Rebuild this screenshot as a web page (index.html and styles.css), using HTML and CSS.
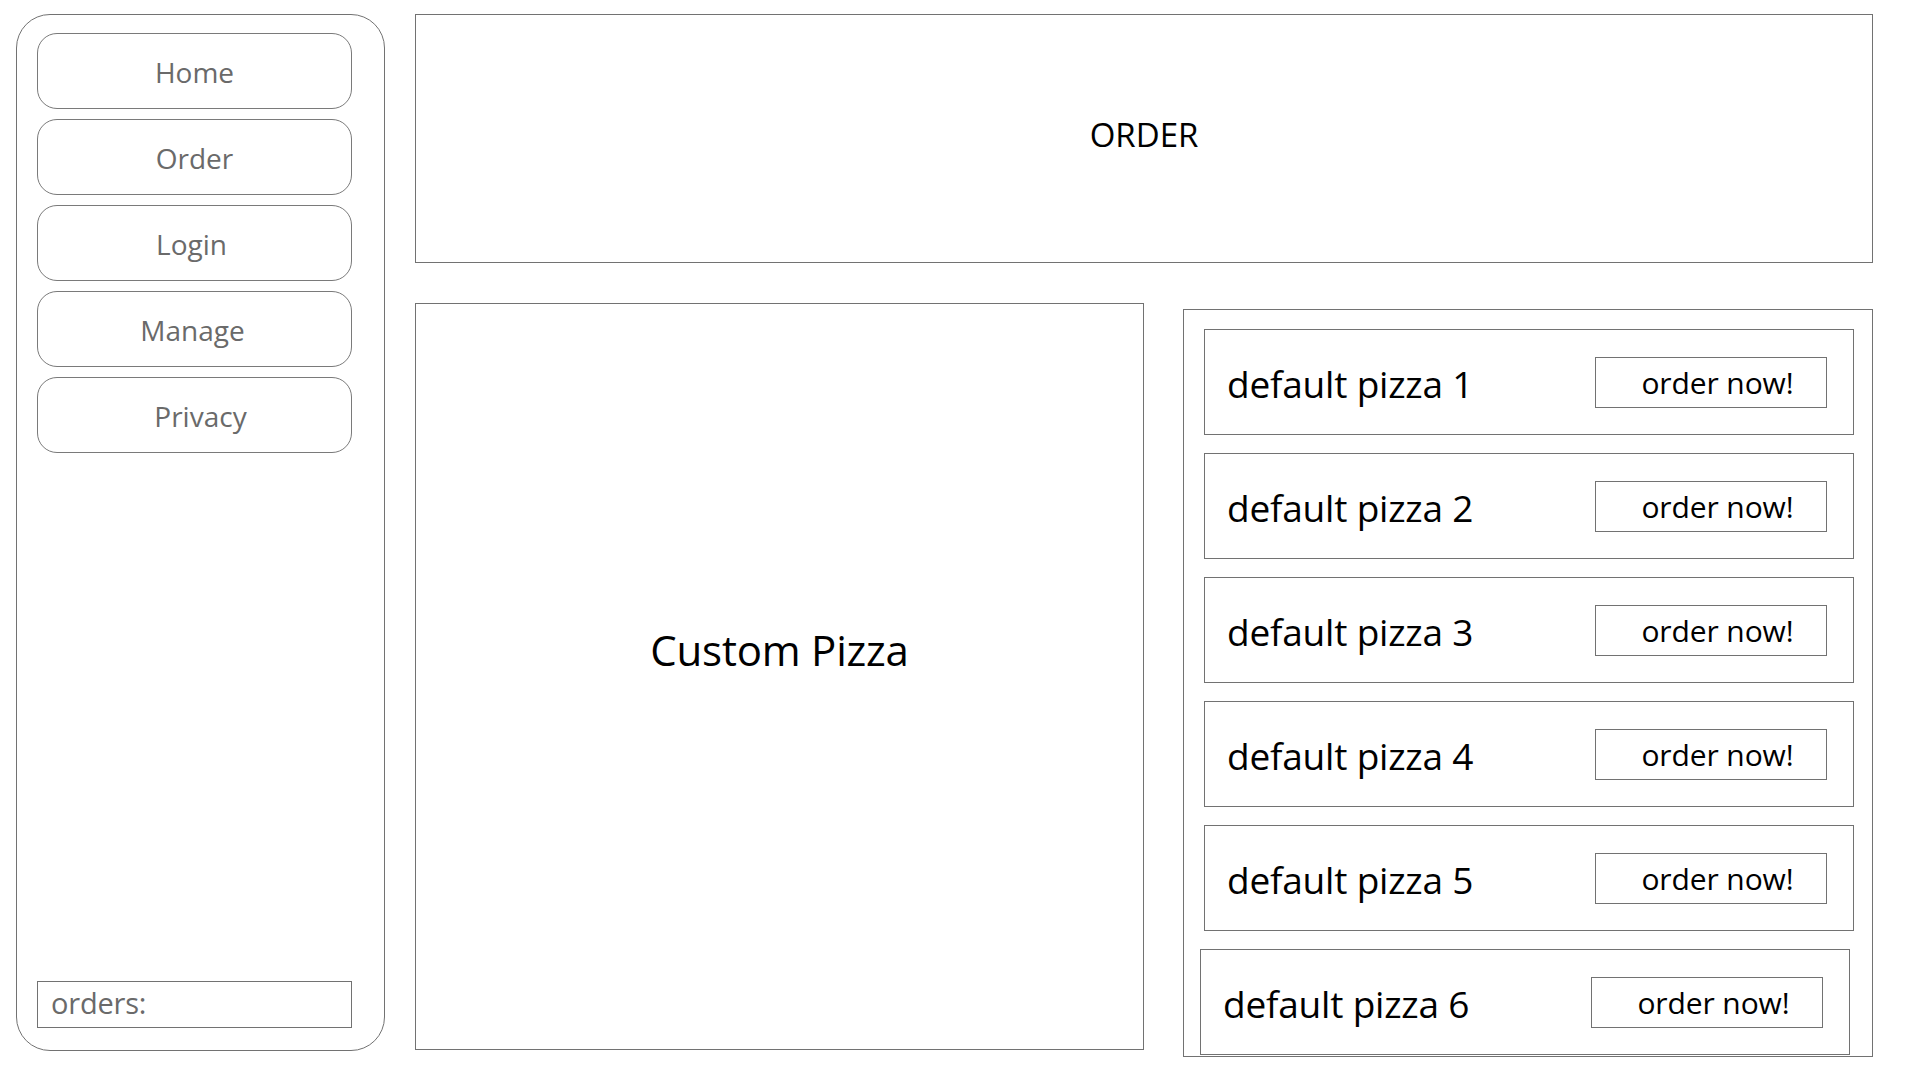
FILE: index.html
```html
<!DOCTYPE html>
<html lang="en">
<head>
<meta charset="utf-8">
<title>Order</title>
<link rel="stylesheet" href="styles.css">
</head>
<body>
<div class="page">
  <aside class="sidebar">
    <nav class="nav">
      <a class="nav-btn" href="#">Home</a>
      <a class="nav-btn" href="#">Order</a>
      <a class="nav-btn nav-login" href="#">Login</a>
      <a class="nav-btn nav-manage" href="#">Manage</a>
      <a class="nav-btn nav-privacy" href="#">Privacy</a>
    </nav>
    <div class="orders">orders:</div>
  </aside>
  <main class="main">
    <header class="header">ORDER</header>
    <div class="content">
      <section class="custom">Custom Pizza</section>
      <section class="list">
        <div class="item"><span class="item-name">default pizza 1</span><button class="order-btn">order now!</button></div>
        <div class="item"><span class="item-name">default pizza 2</span><button class="order-btn">order now!</button></div>
        <div class="item"><span class="item-name">default pizza 3</span><button class="order-btn">order now!</button></div>
        <div class="item"><span class="item-name">default pizza 4</span><button class="order-btn">order now!</button></div>
        <div class="item"><span class="item-name">default pizza 5</span><button class="order-btn">order now!</button></div>
        <div class="item item-shifted"><span class="item-name">default pizza 6</span><button class="order-btn">order now!</button></div>
      </section>
    </div>
  </main>
</div>
</body>
</html>
```
FILE: styles.css
```css
* { box-sizing: border-box; }

html, body {
  margin: 0;
  padding: 0;
  background: #ffffff;
}

body {
  font-family: "Open Sans", "Noto Sans", "Liberation Sans", sans-serif;
  color: #000;
}

.page {
  display: flex;
  align-items: flex-start;
  gap: 30px;
  padding: 14px 0 0 16px;
  width: 1920px;
  height: 1080px;
}

.sidebar {
  width: 369px;
  height: 1037px;
  border: 1px solid #727272;
  border-radius: 34px;
  padding: 18px 32px 22px 20px;
  display: flex;
  flex-direction: column;
  justify-content: space-between;
}

.nav {
  display: flex;
  flex-direction: column;
  gap: 10px;
}

.nav-btn {
  display: flex;
  align-items: center;
  justify-content: center;
  height: 76px;
  border: 1px solid #7a7a7a;
  border-radius: 20px;
  color: #6a6a6a;
  text-decoration: none;
  font-size: 28px;
  padding-top: 2px;
}

.nav-login { padding-right: 6px; }
.nav-manage { padding-right: 4px; }
.nav-privacy { padding-left: 12px; }

.orders {
  height: 47px;
  border: 1px solid #727272;
  color: #6a6a6a;
  font-size: 29px;
  letter-spacing: -0.2px;
  padding: 0 0 4px 13px;
  display: flex;
  align-items: center;
}

.main {
  width: 1458px;
  display: flex;
  flex-direction: column;
}

.header {
  height: 249px;
  border: 1px solid #727272;
  display: flex;
  align-items: center;
  justify-content: center;
  font-size: 33px;
  padding-bottom: 9px;
}

.content {
  display: flex;
  align-items: flex-start;
  gap: 39px;
  margin-top: 40px;
}

.custom {
  width: 729px;
  height: 747px;
  border: 1px solid #727272;
  display: flex;
  align-items: center;
  justify-content: center;
  font-size: 42px;
  letter-spacing: -0.2px;
  padding-bottom: 54px;
}

.list {
  width: 690px;
  height: 748px;
  margin-top: 6px;
  border: 1px solid #727272;
  padding: 19px 18px 1px 20px;
  display: flex;
  flex-direction: column;
  gap: 18px;
}

.item {
  height: 106px;
  flex: none;
  border: 1px solid #727272;
  display: flex;
  align-items: center;
  justify-content: space-between;
  padding: 0 26px 0 22px;
}

.item-shifted {
  margin-left: -4px;
  margin-right: 4px;
}

.item-name {
  font-size: 37px;
  letter-spacing: -0.2px;
  padding-top: 3px;
}

.order-btn {
  width: 232px;
  height: 51px;
  border: 1px solid #727272;
  background: #fff;
  font-family: "Open Sans", "Noto Sans", "Liberation Sans", sans-serif;
  font-size: 30px;
  letter-spacing: -0.1px;
  color: #000;
  padding: 1px 0 0 13px;
  margin: 0;
}
```
